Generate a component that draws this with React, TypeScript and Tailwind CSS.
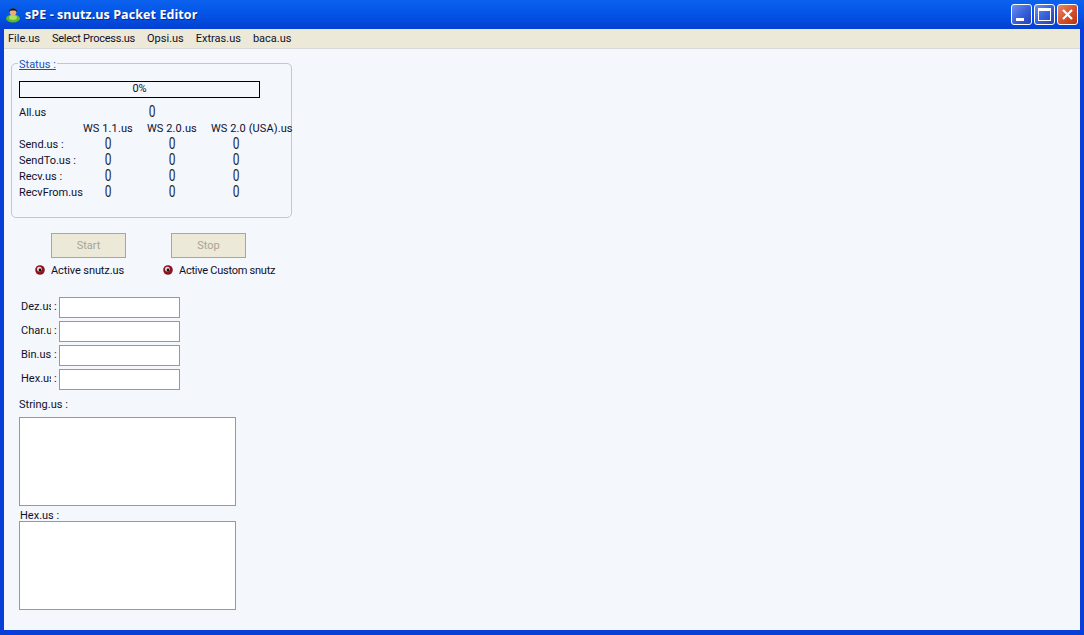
import React from 'react'

const rows = ['Send.us :', 'SendTo.us :', 'Recv.us :', 'RecvFrom.us']
const fields = ['Dez.us', 'Char.us', 'Bin.us', 'Hex.us']

const Zero = ({ offset = 'ml-[21px]' }: { offset?: string }) => (
  <div className="h-4 leading-4">
    <span className={`${offset} inline-block w-[8px] text-center text-[12px] leading-4 scale-y-[1.3] -translate-y-px text-[#2a2a2a]`}>0</span>
  </div>
)

const Radio = () => (
  <svg width="10" height="10" viewBox="0 0 10 10" className="shrink-0">
    <circle cx="5" cy="5" r="4.8" fill="#8c1420" />
    <circle cx="4.4" cy="4.2" r="2.4" fill="#f0e4e4" />
    <circle cx="5" cy="5" r="1.4" fill="#30060a" />
  </svg>
)

const App = () => {
  return (
    <div className="w-[1084px] h-[635px] flex flex-col overflow-hidden bg-[#0a3ed8] text-[#10102a] font-['Roboto',sans-serif] text-[11px]">
      {/* title bar */}
      <div className="h-[29px] shrink-0 flex items-center pl-[5px] pr-[6px] bg-gradient-to-b from-[#0c62ee] via-[#0453e6] to-[#0440d0]">
        <svg width="16" height="17" viewBox="0 0 16 17" className="shrink-0">
          <ellipse cx="8" cy="12.5" rx="7" ry="4" fill="#5cb82c" />
          <ellipse cx="8" cy="11.5" rx="4" ry="2.5" fill="#a8e060" />
          <circle cx="8" cy="6" r="3.4" fill="#e8b078" />
          <path d="M4 6 C4 1 12 1 12 6 L10 4.5 L6 4.5 Z" fill="#181818" />
        </svg>
        <span className="ml-[4px] pt-[2px] text-white font-['Open_Sans',sans-serif] font-bold text-[12.5px] tracking-[0.08px] [text-shadow:1px_1px_0_#0a2a90]">
          sPE - snutz.us Packet Editor
        </span>
        <div className="ml-auto flex gap-[2px]">
          <div className="w-[21px] h-[21px] rounded-[3px] border border-white bg-gradient-to-br from-[#6f8ff0] via-[#3a62dc] to-[#2440b8] flex items-end pl-[4px] pb-[3px]">
            <div className="w-[8px] h-[3px] bg-white" />
          </div>
          <div className="w-[21px] h-[21px] rounded-[3px] border border-white bg-gradient-to-br from-[#6f8ff0] via-[#3a62dc] to-[#2440b8] flex items-center justify-center">
            <div className="w-[13px] h-[13px] border border-white border-t-[3px]" />
          </div>
          <div className="w-[21px] h-[21px] rounded-[3px] border border-white bg-gradient-to-br from-[#e8876a] via-[#d8532c] to-[#b8340f] flex items-center justify-center">
            <svg width="13" height="13" viewBox="0 0 13 13">
              <path d="M2 2 L11 11 M11 2 L2 11" stroke="#fff" strokeWidth="2.2" />
            </svg>
          </div>
        </div>
      </div>

      <div className="flex-1 min-h-0 flex flex-col mx-[4px] mb-[5px] bg-[#f4f7fc]">
        {/* menu */}
        <div className="h-[19px] shrink-0 bg-[#ece9d8] flex items-center pl-[4px] pt-[2px] gap-[12px]">
          <span>File.us</span>
          <span className="tracking-[-0.25px]">Select Process.us</span>
          <span>Opsi.us</span>
          <span>Extras.us</span>
          <span>baca.us</span>
        </div>
        <div className="h-px shrink-0 bg-[#d8d8d8]" />

        {/* status group */}
        <div className="relative shrink-0 mt-[14px] ml-[7px] w-[281px] h-[155px] rounded-[5px] border border-[#c2c8c8] pl-[7px] pt-[17px]">
          <span className="absolute left-[6px] top-[-6px] px-px bg-[#f4f7fc] text-[#1a50b8] underline leading-[13px]">Status :</span>
          <div className="w-[241px] h-[17px] border border-black bg-[#f4f7fc] flex items-center justify-center">0%</div>
          <div className="mt-[7px] grid grid-cols-[64px_64px_64px_64px] leading-4 whitespace-nowrap">
            <div>All.us</div>
            <div />
            <Zero offset="ml-px" />
            <div />
            <div />
            <div className="tracking-[0.1px]">WS 1.1.us</div>
            <div className="tracking-[0.1px]">WS 2.0.us</div>
            <div className="tracking-[0.1px]">WS 2.0 (USA).us</div>
            {rows.map((r) => (
              <React.Fragment key={r}>
                <div>{r}</div>
                <Zero />
                <Zero />
                <Zero />
              </React.Fragment>
            ))}
          </div>
        </div>

        {/* start / stop */}
        <div className="shrink-0 mt-[15px] ml-[47px] flex gap-[45px]">
          <button className="w-[75px] h-[25px] pt-px bg-[#ece9d8] border border-[#a8a898] text-[#a8a496]">Start</button>
          <button className="w-[75px] h-[25px] pt-px bg-[#ece9d8] border border-[#a8a898] text-[#a8a496]">Stop</button>
        </div>
        <div className="shrink-0 mt-[4px] h-[16px] ml-[31px] flex items-center">
          <Radio />
          <span className="ml-[6px] pt-[2px] w-[112px] tracking-[-0.1px]">Active snutz.us</span>
          <Radio />
          <span className="ml-[6px] pt-[2px] tracking-[-0.25px]">Active Custom snutz</span>
        </div>

        {/* converter fields */}
        <div className="shrink-0 mt-[19px] ml-[17px] flex flex-col gap-[3px]">
          {fields.map((f) => (
            <div key={f} className="flex items-center h-[21px]">
              <div className="w-[38px] flex">
                <span className="w-[30px] overflow-hidden whitespace-nowrap">{f}</span>
                <span className="ml-[3px]">:</span>
              </div>
              <input className="w-[121px] h-[21px] bg-white border border-[#8a9bb0] outline-none" />
            </div>
          ))}
        </div>

        <div className="shrink-0 mt-[7px] ml-[15px] h-[15px] leading-4">String.us :</div>
        <textarea className="block shrink-0 mt-[5px] ml-[15px] w-[217px] h-[89px] bg-white border border-[#8a9bb0] resize-none outline-none" />
        <div className="shrink-0 ml-[16px] h-[15px] leading-[20px]">Hex.us :</div>
        <textarea className="block shrink-0 ml-[15px] w-[217px] h-[89px] bg-white border border-[#8a9bb0] resize-none outline-none" />
      </div>
    </div>
  )
}

export default App
